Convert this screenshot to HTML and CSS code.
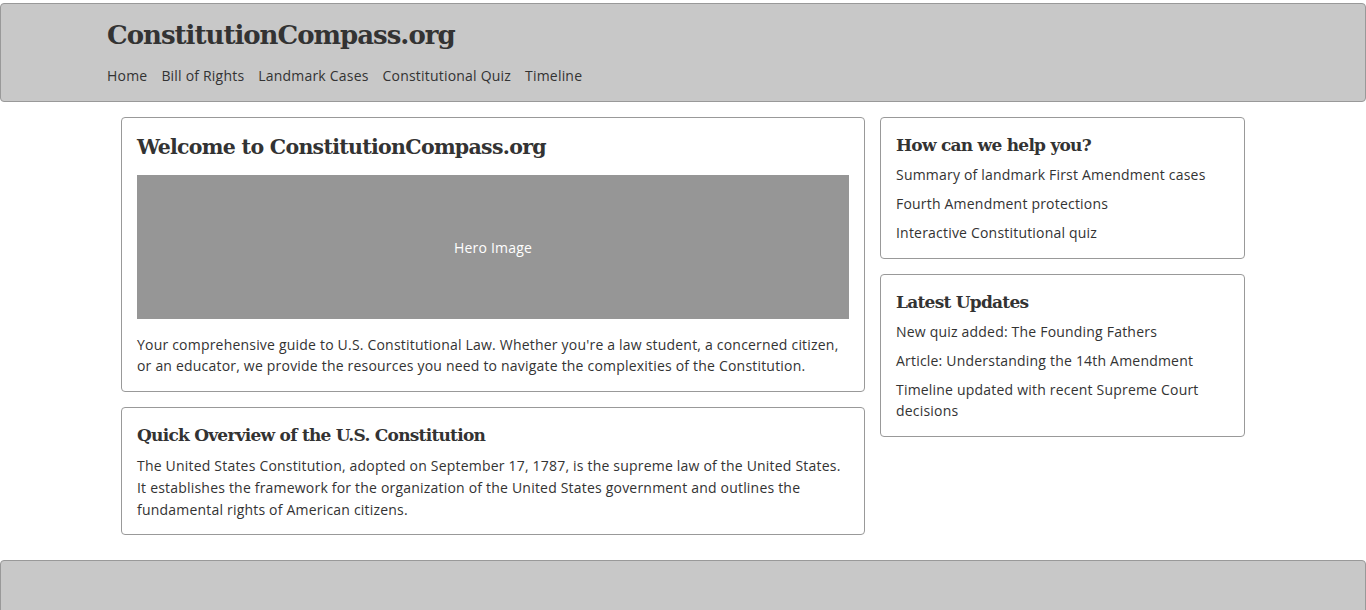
FILE: index.html
```html
<!DOCTYPE html>
<html lang="en">
<head>
<meta charset="utf-8">
<title>ConstitutionCompass.org</title>
<link rel="stylesheet" href="styles.css">
</head>
<body>
<header class="site-header">
  <div class="header-inner">
    <h1 class="site-title">ConstitutionCompass.org</h1>
    <nav class="site-nav">
      <a href="#">Home</a>
      <a href="#">Bill of Rights</a>
      <a href="#">Landmark Cases</a>
      <a href="#">Constitutional Quiz</a>
      <a href="#">Timeline</a>
    </nav>
  </div>
</header>
<main class="layout">
  <div class="main-col">
    <section class="card">
      <h2 class="card-title-lg">Welcome to ConstitutionCompass.org</h2>
      <div class="hero">Hero Image</div>
      <p class="text">Your comprehensive guide to U.S. Constitutional Law. Whether you're a law student, a concerned citizen, or an educator, we provide the resources you need to navigate the complexities of the Constitution.</p>
    </section>
    <section class="card card-overview">
      <h2 class="card-title">Quick Overview of the U.S. Constitution</h2>
      <p class="text text-wide">The United States Constitution, adopted on September 17, 1787, is the supreme law of the United States. It establishes the framework for the organization of the United States government and outlines the fundamental rights of American citizens.</p>
    </section>
  </div>
  <aside class="side-col">
    <section class="card">
      <h3 class="card-title">How can we help you?</h3>
      <ul class="list">
        <li>Summary of landmark First Amendment cases</li>
        <li>Fourth Amendment protections</li>
        <li>Interactive Constitutional quiz</li>
      </ul>
    </section>
    <section class="card">
      <h3 class="card-title">Latest Updates</h3>
      <ul class="list">
        <li>New quiz added: The Founding Fathers</li>
        <li>Article: Understanding the 14th Amendment</li>
        <li>Timeline updated with recent Supreme Court decisions</li>
      </ul>
    </section>
  </aside>
</main>
<footer class="site-footer"></footer>
</body>
</html>
```
FILE: styles.css
```css
* { box-sizing: border-box; }
html, body { margin: 0; padding: 0; }
body {
  background: #fff;
  color: #333;
  font-family: "Open Sans", "Liberation Sans", sans-serif;
  font-size: 14px;
  letter-spacing: 0.2px;
  padding-top: 3px;
}
.site-header {
  background: #c8c8c8;
  border: 1px solid #999;
  border-radius: 4px;
  height: 99px;
}
.header-inner {
  padding: 13px 0 0 106px;
}
.site-title {
  margin: 0;
  font-family: "DejaVu Serif", "Liberation Serif", serif;
  font-weight: bold;
  font-size: 26px;
  line-height: 36px;
  color: #333;
  letter-spacing: -1px;
}
.site-nav {
  display: flex;
  gap: 14px;
  margin-top: 13px;
}
.site-nav a {
  color: #333;
  text-decoration: none;
  font-size: 14px;
  line-height: 20px;
}
.layout {
  display: grid;
  grid-template-columns: 744px 365px;
  gap: 15px;
  width: 1124px;
  margin: 15px auto 0;
  align-items: start;
}
.main-col, .side-col {
  display: flex;
  flex-direction: column;
  gap: 15px;
}
.card {
  border: 1px solid #999;
  border-radius: 4px;
  background: #fff;
  padding: 15px;
}
.card-overview { padding-bottom: 13px; }
.card-title-lg {
  margin: 0 0 14px;
  font-family: "DejaVu Serif", "Liberation Serif", serif;
  font-weight: bold;
  font-size: 20.5px;
  line-height: 28px;
  letter-spacing: -0.7px;
  color: #333;
}
.card-title {
  margin: 0 0 7px;
  font-family: "DejaVu Serif", "Liberation Serif", serif;
  font-weight: bold;
  font-size: 17px;
  line-height: 24px;
  letter-spacing: -0.75px;
  color: #333;
}
.card-overview .card-title { margin-bottom: 8px; }
.hero {
  background: #969696;
  color: #fff;
  height: 144px;
  display: flex;
  align-items: center;
  justify-content: center;
  font-size: 14px;
  font-weight: 500;
  margin-bottom: 15px;
}
.text {
  margin: 0;
  line-height: 21px;
}
.text-wide { line-height: 22px; }
.list {
  list-style: none;
  margin: 0;
  padding: 0;
}
.list li {
  line-height: 21px;
  margin-bottom: 8px;
}
.list li:last-child { margin-bottom: 0; }
.site-footer {
  background: #c8c8c8;
  border: 1px solid #999;
  border-radius: 4px;
  height: 80px;
  margin-top: 25px;
}
```
